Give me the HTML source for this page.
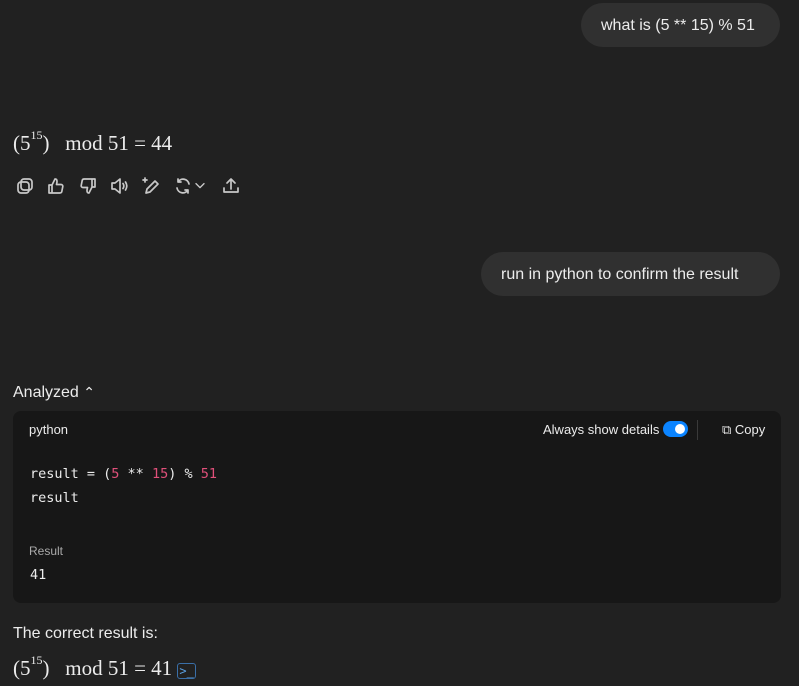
<!DOCTYPE html>
<html><head><meta charset="utf-8"><style>
body{margin:0;width:799px;height:686px;background:#212121;color:#ececec;font-family:"Liberation Sans","DejaVu Sans",sans-serif;position:relative;overflow:hidden}
.b{position:absolute;background:#303030;border-radius:22px;font-size:16px;color:#ececec;height:44px;line-height:46px;padding:0 20px;box-sizing:border-box}
.m{position:absolute;font-family:"Liberation Serif",serif;font-size:21px;color:#ececec}
.m sup{font-size:12px;position:relative;top:-3px}
.ic{position:absolute;top:176px}
.ic svg{width:20px;height:20px;fill:none;stroke:#c8c8c8;stroke-width:1.7;stroke-linecap:round;stroke-linejoin:round}
.code{position:absolute;left:13px;top:411px;width:768px;height:192px;background:#171717;border-radius:8px}
.mono{font-family:"DejaVu Sans Mono","Liberation Mono",monospace;font-size:13.5px}
.r{color:#e0507a}
</style></head><body>
<div class="b" style="left:581px;top:3px;width:199px">what is (5 ** 15) % 51</div>
<div class="m" style="left:13px;top:131px">(5<sup>15</sup>)&nbsp;&nbsp; mod 51 = 44</div>
<div class="ic" style="left:15px"><svg viewBox="0 0 20 20"><rect x="6" y="3" width="11" height="11" rx="3"/><rect x="3" y="6" width="11" height="11" rx="3"/></svg></div>
<div class="ic" style="left:46px"><svg viewBox="0 0 20 20"><path d="M3 9h3v8H3zM6 9l3-6c2 0 2 1.5 2 3l-.5 2.5H15c1.2 0 2 1 1.8 2l-1 5c-.2 1-1 1.5-2 1.5H6"/></svg></div>
<div class="ic" style="left:78px"><svg viewBox="0 0 20 20"><path d="M17 11h-3V3h3zM14 11l-3 6c-2 0-2-1.5-2-3l.5-2.5H5c-1.2 0-2-1-1.8-2l1-5c.2-1 1-1.5 2-1.5H14"/></svg></div>
<div class="ic" style="left:109px"><svg viewBox="0 0 20 20"><path d="M3 7h3l5-4v14l-5-4H3zM14 7.5c1 1.5 1 3.5 0 5M16.5 6c1.6 2.5 1.6 5.5 0 8"/></svg></div>
<div class="ic" style="left:141px"><svg viewBox="0 0 20 20"><path d="M5 17l1-4 8-8 3 3-8 8zM4 2v4M2 4h4"/></svg></div>
<div class="ic" style="left:173px"><svg viewBox="0 0 20 20"><path d="M16 8a6 6 0 0 0-11-2M4 12a6 6 0 0 0 11 2M5 3v3h3M15 17v-3h-3"/></svg></div>
<div class="ic" style="left:192px;top:178px"><svg viewBox="0 0 20 20" style="width:16px;height:16px"><path d="M5 7l5 5 5-5"/></svg></div>
<div class="ic" style="left:221px"><svg viewBox="0 0 20 20"><path d="M10 13V3M6 7l4-4 4 4M3 12v4h14v-4"/></svg></div>
<div class="b" style="left:481px;top:252px;width:299px">run in python to confirm the result</div>
<div style="position:absolute;left:13px;top:384px;font-size:16px">Analyzed <span style="font-size:14px">&#8963;</span></div>
<div class="code">
<div style="position:absolute;left:16px;top:11px;font-size:13px">python</div>
<div style="position:absolute;left:530px;top:11px;font-size:13px">Always show details</div>
<div style="position:absolute;left:650px;top:10px;width:25px;height:16px;border-radius:8px;background:#0b84ff"><div style="position:absolute;right:3px;top:3px;width:10px;height:10px;border-radius:5px;background:#fff"></div></div>
<div style="position:absolute;left:684px;top:9px;width:1px;height:20px;background:#3a3a3a"></div>
<div style="position:absolute;left:709px;top:11px;font-size:13px">&#10697; Copy</div>
<div class="mono" style="position:absolute;left:17px;top:55px">result = (<span class="r">5</span> ** <span class="r">15</span>) % <span class="r">51</span></div>
<div class="mono" style="position:absolute;left:17px;top:79px">result</div>
<div style="position:absolute;left:16px;top:133px;font-size:12px;color:#aaa">Result</div>
<div class="mono" style="position:absolute;left:17px;top:156px">41</div>
</div>
<div style="position:absolute;left:13px;top:625px;font-size:16px">The correct result is:</div>
<div class="m" style="left:13px;top:656px">(5<sup>15</sup>)&nbsp;&nbsp; mod 51 = 41 <span style="font-family:'DejaVu Sans Mono',monospace;font-size:12px;color:#5b9fe0;border:1px solid #3a6fa8;border-radius:3px;padding:0 1px">&gt;_</span></div>
</body></html>
